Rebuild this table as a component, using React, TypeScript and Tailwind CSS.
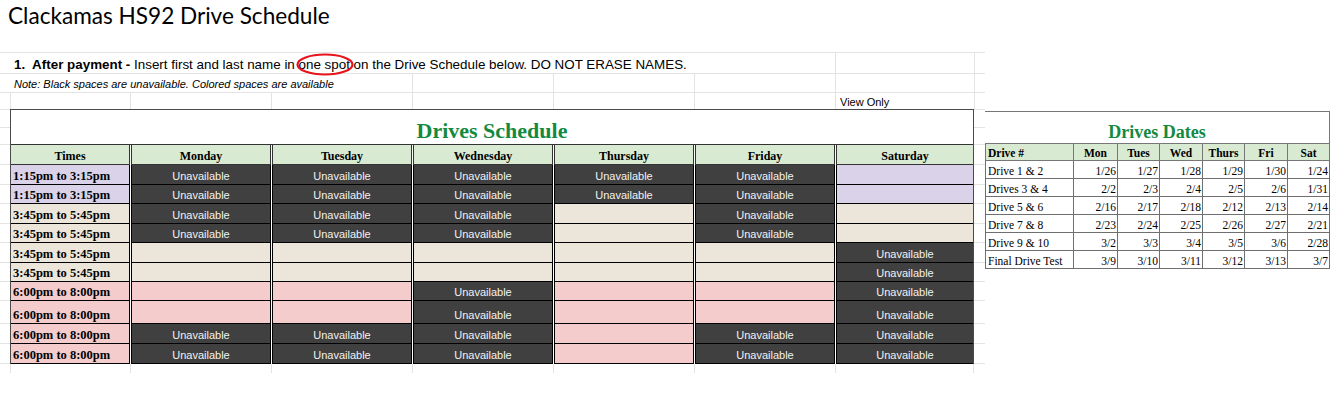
const SANS = "font-['Liberation_Sans',Arial,sans-serif]";
const SERIF = "font-['Liberation_Serif','Times_New_Roman',serif]";

type Tone = "U" | "purple" | "beige" | "pink";

const BG: Record<Tone, string> = {
  U: "bg-[#404040]",
  purple: "bg-[#d9d2e9]",
  beige: "bg-[#ece6da]",
  pink: "bg-[#f4cccc]",
};

const DAYS = ["Monday", "Tuesday", "Wednesday", "Thursday", "Friday", "Saturday"];

const SLOTS: { time: string; tone: Tone; h: string; cells: Tone[] }[] = [
  { time: "1:15pm to 3:15pm", tone: "purple", h: "h-[20px]", cells: ["U", "U", "U", "U", "U", "purple"] },
  { time: "1:15pm to 3:15pm", tone: "purple", h: "h-[19px]", cells: ["U", "U", "U", "U", "U", "purple"] },
  { time: "3:45pm to 5:45pm", tone: "beige", h: "h-[20px]", cells: ["U", "U", "U", "beige", "U", "beige"] },
  { time: "3:45pm to 5:45pm", tone: "beige", h: "h-[19px]", cells: ["U", "U", "U", "beige", "U", "beige"] },
  { time: "3:45pm to 5:45pm", tone: "beige", h: "h-[20px]", cells: ["beige", "beige", "beige", "beige", "beige", "U"] },
  { time: "3:45pm to 5:45pm", tone: "beige", h: "h-[19px]", cells: ["beige", "beige", "beige", "beige", "beige", "U"] },
  { time: "6:00pm to 8:00pm", tone: "pink", h: "h-[19px]", cells: ["pink", "pink", "U", "pink", "pink", "U"] },
  { time: "6:00pm to 8:00pm", tone: "pink", h: "h-[23px]", cells: ["pink", "pink", "U", "pink", "pink", "U"] },
  { time: "6:00pm to 8:00pm", tone: "pink", h: "h-[20px]", cells: ["U", "U", "U", "pink", "U", "U"] },
  { time: "6:00pm to 8:00pm", tone: "pink", h: "h-[20px]", cells: ["U", "U", "U", "pink", "U", "U"] },
];

const DATES: [string, string[]][] = [
  ["Drive 1 & 2", ["1/26", "1/27", "1/28", "1/29", "1/30", "1/24"]],
  ["Drives 3 & 4", ["2/2", "2/3", "2/4", "2/5", "2/6", "1/31"]],
  ["Drive 5 & 6", ["2/16", "2/17", "2/18", "2/12", "2/13", "2/14"]],
  ["Drive 7 & 8", ["2/23", "2/24", "2/25", "2/26", "2/27", "2/21"]],
  ["Drive 9 & 10", ["3/2", "3/3", "3/4", "3/5", "3/6", "2/28"]],
  ["Final Drive Test", ["3/9", "3/10", "3/11", "3/12", "3/13", "3/7"]],
];

// spreadsheet row lines that show in the narrow margins beside the tables
const TICKS = ["h-[19px] border-t", "h-[17px]", "h-[20px]", "h-[20px]", "h-[19px]", "h-[20px]", "h-[19px]", "h-[20px]", "h-[19px]", "h-[19px]", "h-[23px]", "h-[20px]", "h-[20px]"];

function Ticks({ width }: { width: string }) {
  return (
    <div className={`${width} shrink-0`}>
      {TICKS.map((t, i) => (
        <div key={i} className={`${t} border-b border-[#e3e3e3]`} />
      ))}
    </div>
  );
}

function edge(i: number, last: number) {
  if (i === 0) return "border-r";
  if (i === last) return "border-l";
  return "border-x";
}

function ScheduleTable() {
  return (
    <div className="flex w-[964px] flex-col">
      <div className="border-x border-t border-[#4a4a4a] bg-white">
        <div className={`flex h-[35px] items-end justify-center border-b border-[#333] pb-[1px] ${SERIF} text-[22px] font-bold leading-[25px] text-[#138a3f]`}>
          Drives Schedule
        </div>
        <div className="grid h-[20px] grid-cols-[119px_140px_140px_140px_140px_140px_137px] gap-x-px">
          {["Times", ...DAYS].map((d, i) => (
            <div
              key={d}
              className={`flex items-end justify-center border-b border-[#333] bg-[#d9ead3] pb-[1px] ${edge(i, 6)} ${SERIF} text-[12px] font-bold leading-[14px] text-black`}
            >
              {d}
            </div>
          ))}
        </div>
        {SLOTS.map((s, r) => (
          <div key={r} className={`grid ${s.h} grid-cols-[119px_140px_140px_140px_140px_140px_137px] gap-x-px`}>
            <div className={`flex items-end border-b border-r border-black pb-[1px] pl-[2px] ${BG[s.tone]} ${SERIF} text-[12.5px] font-bold leading-[14px] text-black`}>
              {s.time}
            </div>
            {s.cells.map((c, i) => (
              <div
                key={i}
                className={`flex items-end justify-center border-b border-black pb-[1px] ${edge(i + 1, 6)} ${BG[c]} ${SANS} text-[11px] leading-[13px] text-[#f2f2f2]`}
              >
                {c === "U" ? "Unavailable" : ""}
              </div>
            ))}
          </div>
        ))}
      </div>
      <div className="flex h-[9px]">
        <div className="w-[121px] border-x border-[#e3e3e3]" />
        <div className="w-[141px] border-r border-[#e3e3e3]" />
        <div className="w-[141px] border-r border-[#e3e3e3]" />
        <div className="w-[141px] border-r border-[#e3e3e3]" />
        <div className="w-[141px] border-r border-[#e3e3e3]" />
        <div className="w-[141px] border-r border-[#e3e3e3]" />
        <div className="w-[138px] border-r border-[#e3e3e3]" />
      </div>
    </div>
  );
}

function DatesTable() {
  const heads = ["Drive #", "Mon", "Tues", "Wed", "Thurs", "Fri", "Sat"];
  return (
    <div className={`mt-[2px] w-[345px] ${SERIF} text-black`}>
      <div className="flex h-[33px] items-end justify-center border-y border-r border-[#777] text-[18px] font-bold leading-[21px] text-[#138a3f]">
        Drives Dates
      </div>
      <div className="grid h-[17px] grid-cols-[89px_44px_42px_43px_42px_43px_42px] bg-[#d9ead3] text-[11.5px] font-bold leading-[13px]">
        {heads.map((h, i) => (
          <div
            key={h}
            className={`flex items-end border-b border-r border-[#777] ${i === 0 ? "border-l pl-[2px]" : "justify-center"}`}
          >
            {h}
          </div>
        ))}
      </div>
      {DATES.map(([name, vals]) => (
        <div key={name} className="grid h-[18px] grid-cols-[89px_44px_42px_43px_42px_43px_42px] text-[11.5px] leading-[13px]">
          <div className="flex items-end border-x border-b border-[#6f6f6f] pl-[2px]">{name}</div>
          {vals.map((v, i) => (
            <div key={i} className="flex items-end justify-end border-b border-r border-[#6f6f6f] pr-[1px]">
              {v}
            </div>
          ))}
        </div>
      ))}
    </div>
  );
}

export default function App() {
  return (
    <div className="h-[398px] w-[1331px] overflow-hidden bg-white">
      <div className="h-[52px] pl-[8px] pt-[2px] font-['Lato','Noto_Sans',sans-serif] text-[22.6px] leading-[28px] text-black">
        Clackamas HS92 Drive Schedule
      </div>

      <div className={`w-[985px] ${SANS} text-black`}>
        <div className="flex h-[22px] border-y border-[#e3e3e3]">
          <div className="relative flex w-[836px] items-end border-r border-[#e3e3e3] pb-[1px] pl-[14px] text-[13.4px] leading-[15px]">
            <span className="whitespace-nowrap">
              <b>1.&nbsp; After payment -</b> Insert first and last name in one spot on the Drive Schedule below. DO NOT ERASE NAMES.
            </span>
            <svg className="absolute left-[296px] top-0 h-[23px] w-[58px]" viewBox="0 0 58 23">
              <ellipse cx="29" cy="11.5" rx="27.5" ry="10" fill="none" stroke="#e8141b" strokeWidth="2.2" />
            </svg>
          </div>
          <div className="w-[139px] border-r border-[#e3e3e3]" />
        </div>

        <div className="flex h-[19px] border-b border-[#e3e3e3]">
          <div className="flex w-[413px] items-end border-r border-[#e3e3e3] pb-[1px] pl-[14px] text-[11px] italic leading-[13px]">
            <span className="whitespace-nowrap">Note: Black spaces are unavailable. Colored spaces are available</span>
          </div>
          <div className="w-[141px] border-r border-[#e3e3e3]" />
          <div className="w-[141px] border-r border-[#e3e3e3]" />
          <div className="w-[141px] border-r border-[#e3e3e3]" />
          <div className="w-[139px] border-r border-[#e3e3e3]" />
        </div>

        <div className="flex h-[16px]">
          <div className="w-[11px] border-r border-[#e3e3e3]" />
          <div className="w-[120px] border-r border-[#e3e3e3]" />
          <div className="w-[141px] border-r border-[#e3e3e3]" />
          <div className="w-[141px] border-r border-[#e3e3e3]" />
          <div className="w-[141px] border-r border-[#e3e3e3]" />
          <div className="w-[141px] border-r border-[#e3e3e3]" />
          <div className="w-[141px] border-r border-[#e3e3e3]" />
          <div className="flex w-[139px] items-end border-r border-[#e3e3e3] pl-[4px] text-[11px] leading-[13px]">View Only</div>
        </div>
      </div>

      <div className="flex">
        <Ticks width="w-[10px]" />
        <ScheduleTable />
        <Ticks width="w-[11px]" />
        <DatesTable />
      </div>
    </div>
  );
}
